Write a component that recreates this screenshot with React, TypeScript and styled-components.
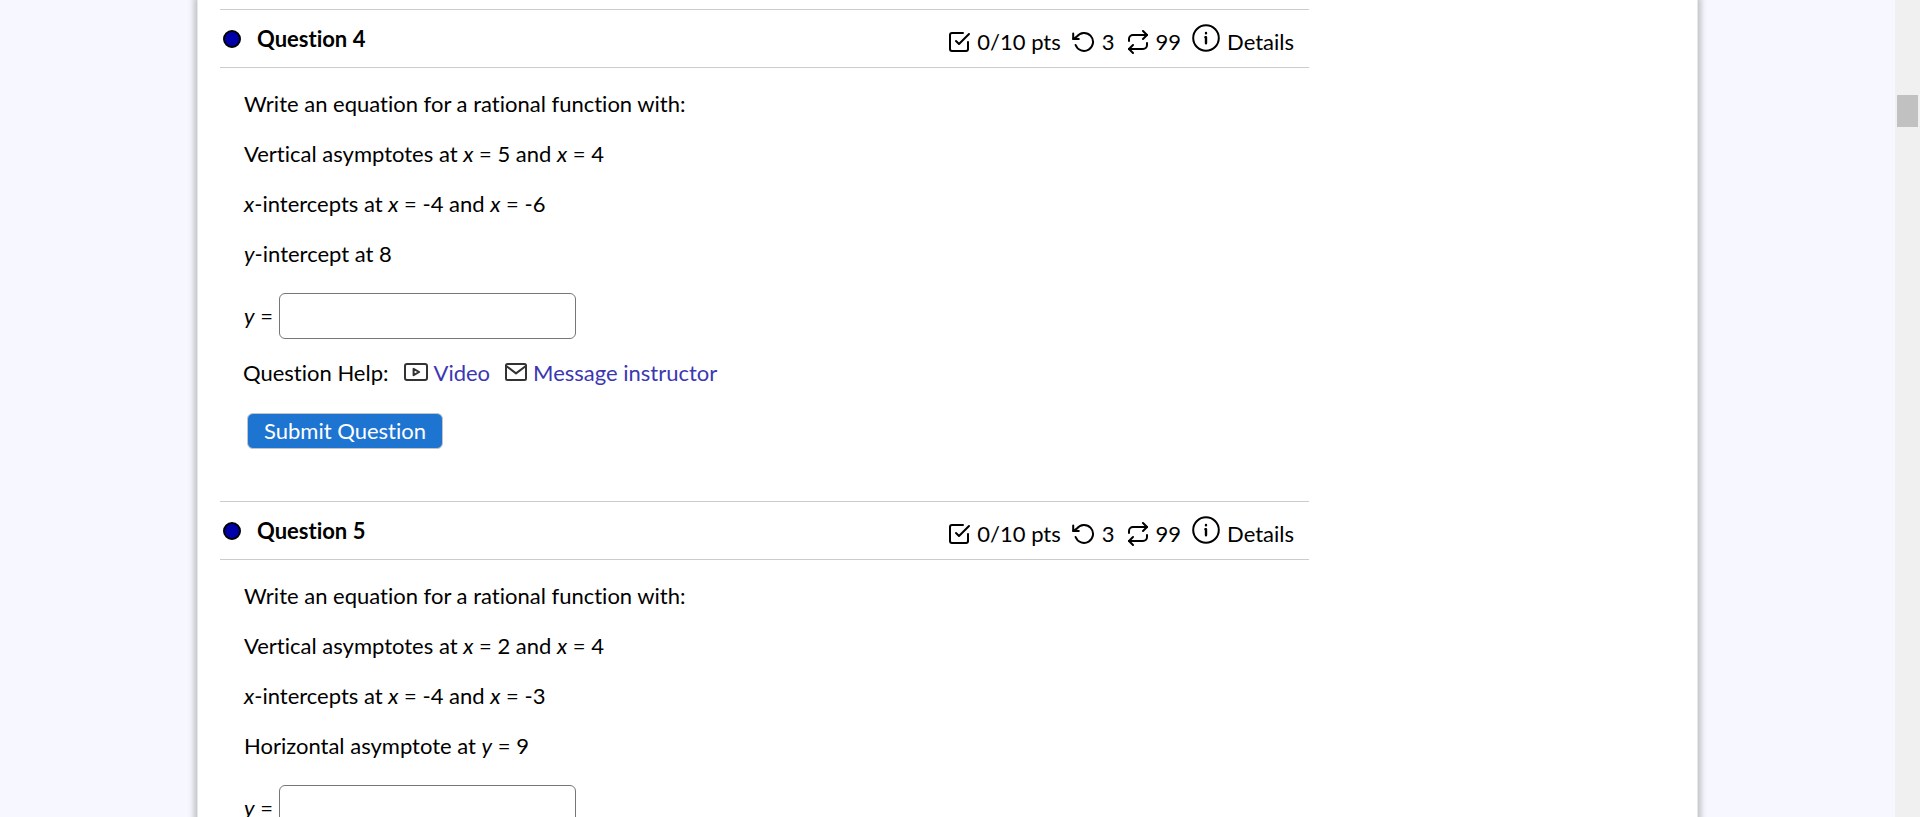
import React from "react";
import styled, { createGlobalStyle } from "styled-components";

const GlobalStyle = createGlobalStyle`
  * { box-sizing: border-box; }
  body {
    margin: 0;
    background: #f6f7ff;
    color: #000;
    font-family: "Trebuchet MS", "Lato", sans-serif;
    font-size: 22px;
    line-height: 28px;
    font-variant-ligatures: none;
  }
`;

const Shell = styled.div`
  display: flex;
  height: 100vh;
`;

const Viewport = styled.div`
  flex: 1;
  min-width: 0;
  overflow: hidden;
  padding: 0 197px;
`;

const Card = styled.main`
  min-height: 100%;
  background: #fff;
  border: solid #e8e8e8;
  border-width: 0 1px;
  box-shadow: 0 0 6px 3px #c0c0c4;
  padding: 9px 22px 0;
`;

const Track = styled.div`
  flex: none;
  width: 25px;
  background: #f0f0f0;
  padding: 95px 2px 0;
`;

const Thumb = styled.div`
  height: 32px;
  background: #c1c1c1;
`;

const Question = styled.section`
  max-width: 1089px;
  padding-bottom: 52px;
`;

const Header = styled.header`
  display: flex;
  justify-content: space-between;
  align-items: center;
  height: 59px;
  padding: 0 15px 0 3px;
  border: solid #ccc;
  border-width: 1px 0;
`;

const TitleGroup = styled.div`
  display: flex;
  align-items: center;
  gap: 16px;
`;

const Dot = styled.span`
  width: 18px;
  height: 18px;
  border: 2px solid #000;
  border-radius: 50%;
  background: #0000aa;
`;

const Title = styled.h2`
  margin: 0;
  font-size: 22px;
  line-height: 28px;
  font-weight: 700;
`;

const Meta = styled.div`
  display: flex;
  align-items: center;
  gap: 11px;
  padding-top: 6px;
`;

const MetaItem = styled.span`
  display: flex;
  align-items: center;
  gap: 6px;
`;

const DetailsButton = styled.button`
  display: flex;
  align-items: center;
  gap: 7px;
  height: 28px;
  padding: 0;
  border: 0;
  background: none;
  color: inherit;
  font: inherit;
  cursor: pointer;

  svg {
    margin-bottom: 8px;
  }
`;

const Icon = styled.svg<{ $width: number; $height: number; $stroke?: number }>`
  display: block;
  flex: none;
  width: ${(p) => p.$width}px;
  height: ${(p) => p.$height}px;
  fill: none;
  stroke: currentColor;
  stroke-width: ${(p) => p.$stroke ?? 2};
  stroke-linecap: round;
  stroke-linejoin: round;
`;

const Body = styled.div`
  padding: 22px 24px 0;
`;

const Line = styled.p`
  margin: 0 0 22px;
`;

const AnswerRow = styled.label`
  display: flex;
  align-items: center;
  gap: 6px;
  padding-top: 3px;
`;

const AnswerInput = styled.input`
  width: 297px;
  height: 46px;
  padding: 4px 10px;
  border: 1px solid #767676;
  border-radius: 6px;
  font: inherit;
  background: #fff;
`;

const Footer = styled.div`
  padding: 20px 23px 0;
`;

const Help = styled.div`
  display: flex;
  align-items: center;
  gap: 15px;
`;

const HelpLink = styled.a`
  display: flex;
  align-items: center;
  gap: 6px;
  color: #3b37b3;
  text-decoration: none;

  svg {
    color: #333;
    margin-bottom: 2px;
  }
`;

const Submit = styled.button`
  display: block;
  height: 36px;
  margin: 26px 4px 0;
  padding: 0 16px;
  border: 1px solid #c4c4c4;
  border-radius: 6px;
  background: #1e74d1;
  color: #fff;
  font: inherit;
  line-height: 28px;
  cursor: pointer;
`;

const CheckIcon = () => (
  <Icon $width={24} $height={24} viewBox="0 0 24 24" aria-hidden="true">
    <path d="M9 11l3 3L22 4" />
    <path d="M21 12v7a2 2 0 0 1-2 2H5a2 2 0 0 1-2-2V5a2 2 0 0 1 2-2h11" />
  </Icon>
);

const RetryIcon = () => (
  <Icon $width={24} $height={24} viewBox="0 0 24 24" aria-hidden="true">
    <path d="M1.2 3.5V9h5.6" />
    <path d="M3.6 15a9 9 0 1 0 1.2-8.4L1.2 9" />
  </Icon>
);

const RepeatIcon = () => (
  <Icon $width={24} $height={24} viewBox="0 0 24 24" aria-hidden="true">
    <path d="M17 1l4 4-4 4" />
    <path d="M3 11V9a4 4 0 0 1 4-4h14" />
    <path d="M7 23l-4-4 4-4" />
    <path d="M21 13v2a4 4 0 0 1-4 4H3" />
  </Icon>
);

const InfoIcon = () => (
  <Icon $width={28} $height={28} viewBox="0 0 28 28" aria-hidden="true">
    <circle cx="14" cy="14" r="12.8" />
    <path d="M14 8.9v.3M13.4 13.2h.6v6" strokeWidth="2.4" />
  </Icon>
);

const VideoIcon = () => (
  <Icon $width={24} $height={18} viewBox="0 0 24 18" aria-hidden="true">
    <rect x="1" y="1" width="22" height="16" rx="2" />
    <path d="M9.6 5.8v6.4l5.6-3.2z" />
  </Icon>
);

const MailIcon = () => (
  <Icon $width={22} $height={18} viewBox="0 0 22 18" aria-hidden="true">
    <rect x="1" y="1" width="20" height="16" rx="1.5" />
    <path d="M1.5 3.2L11 10.4l9.5-7.2" />
  </Icon>
);

const X = <i>x</i>;
const Y = <i>y</i>;

const questions = [
  {
    number: 4,
    hasFooter: true,
    lines: [
      <>Write an equation for a rational function with:</>,
      <>Vertical asymptotes at {X} = 5 and {X} = 4</>,
      <>{X}-intercepts at {X} = -4 and {X} = -6</>,
      <>{Y}-intercept at 8</>,
    ],
  },
  {
    number: 5,
    hasFooter: false,
    lines: [
      <>Write an equation for a rational function with:</>,
      <>Vertical asymptotes at {X} = 2 and {X} = 4</>,
      <>{X}-intercepts at {X} = -4 and {X} = -3</>,
      <>Horizontal asymptote at {Y} = 9</>,
    ],
  },
];

export default function App() {
  return (
    <>
      <GlobalStyle />
      <Shell>
        <Viewport>
          <Card>
            {questions.map((q) => (
              <Question key={q.number}>
                <Header>
                  <TitleGroup>
                    <Dot />
                    <Title>Question {q.number}</Title>
                  </TitleGroup>
                  <Meta>
                    <MetaItem>
                      <CheckIcon />
                      0/10 pts
                    </MetaItem>
                    <MetaItem>
                      <RetryIcon />3
                    </MetaItem>
                    <MetaItem>
                      <RepeatIcon />
                      99
                    </MetaItem>
                    <DetailsButton type="button">
                      <InfoIcon />
                      Details
                    </DetailsButton>
                  </Meta>
                </Header>
                <Body>
                  {q.lines.map((line, i) => (
                    <Line key={i}>{line}</Line>
                  ))}
                  <AnswerRow>
                    <span>{Y} =</span>
                    <AnswerInput type="text" />
                  </AnswerRow>
                </Body>
                {q.hasFooter && (
                  <Footer>
                    <Help>
                      <span>Question Help:</span>
                      <HelpLink href="#video">
                        <VideoIcon />
                        Video
                      </HelpLink>
                      <HelpLink href="#message">
                        <MailIcon />
                        Message instructor
                      </HelpLink>
                    </Help>
                    <Submit type="button">Submit Question</Submit>
                  </Footer>
                )}
              </Question>
            ))}
          </Card>
        </Viewport>
        <Track>
          <Thumb />
        </Track>
      </Shell>
    </>
  );
}
